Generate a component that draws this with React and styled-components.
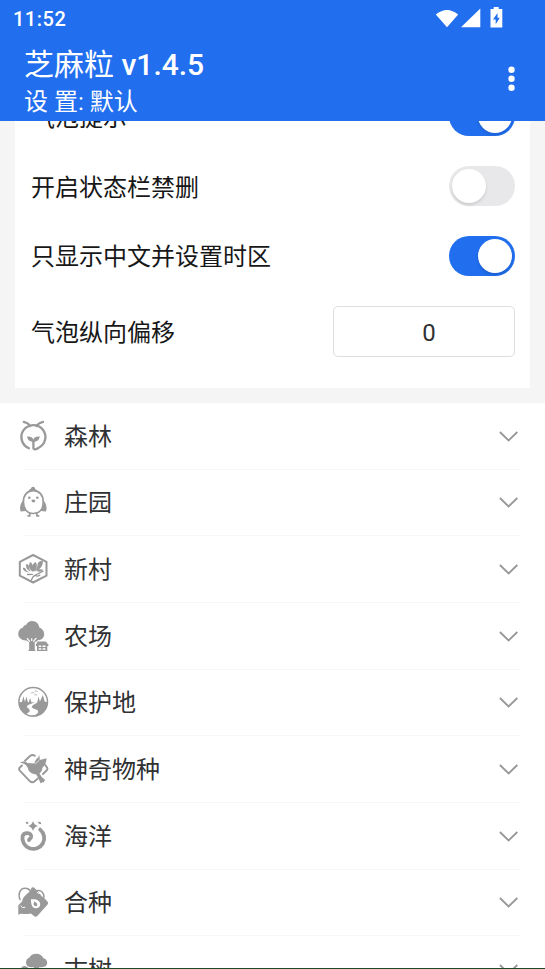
import React from "react";
import styled, { createGlobalStyle } from "styled-components";

const GlobalStyle = createGlobalStyle`
  * { box-sizing: border-box; }
  html, body { margin: 0; padding: 0; overflow: hidden; }
  body { font-family: Roboto, "Noto Sans CJK SC", sans-serif; }
`;

const Screen = styled.div`
  width: 545px;
  height: 969px;
  overflow: hidden;
  display: flex;
  flex-direction: column;
  background: #f5f5f5;
  border-bottom: 1px solid #1d4a22;
`;

const Header = styled.header`
  flex: none;
  height: 121px;
  background: #216eee;
  color: #fff;
`;

const StatusBar = styled.div`
  height: 38px;
  padding: 0 40px 0 13px;
  display: flex;
  justify-content: space-between;
  align-items: center;
  font-size: 20px;
  font-weight: 500;
  letter-spacing: 0.5px;
`;

const StatusIcons = styled.div`
  display: flex;
  svg { display: block; }
`;

const TitleBar = styled.div`
  height: 83px;
  padding: 2px 24px 0 24px;
  display: flex;
  justify-content: space-between;
`;

const Title = styled.h1`
  margin: 0;
  font-size: 30px;
  line-height: 44px;
  font-weight: 500;
  font-family: Roboto, sans-serif;
  white-space: pre;
`;

const TitleName = styled.span`
  font-family: "Noto Sans CJK SC", sans-serif;
  font-weight: 400;
`;

const Subtitle = styled.div`
  font-size: 24px;
  line-height: 30px;
  white-space: pre;
`;

const MenuButton = styled.button`
  border: 0;
  padding: 0;
  margin-top: 26px;
  width: 20px;
  height: 26px;
  background: none;
  svg { display: block; }
`;

const Content = styled.main`
  flex: 1;
  min-height: 0;
  overflow: hidden;
`;

const Card = styled.section`
  margin: 0 15px 15px;
  height: 267px;
  padding: 0 15px 0 16px;
  background: #fff;
  overflow: hidden;
`;

const SettingRow = styled.div`
  height: ${(p) => p.$height}px;
  margin-top: ${(p) => p.$offset || 0}px;
  display: flex;
  align-items: center;
  justify-content: space-between;
  font-size: 24px;
  line-height: 36px;
  color: #171717;
`;

const SettingLabel = styled.span`
  padding-top: ${(p) => p.$drop}px;
`;

const Switch = styled.div`
  width: 66px;
  height: 40px;
  padding: 3px;
  border-radius: 20px;
  display: flex;
  justify-content: ${(p) => (p.$on ? "flex-end" : "flex-start")};
  background: ${(p) => (p.$on ? "#216eee" : "#e8e8ea")};
`;

const Knob = styled.span`
  width: 34px;
  height: 34px;
  border-radius: 50%;
  background: #fff;
  box-shadow: 0 2px 3px rgba(0, 0, 0, 0.12);
`;

const NumberField = styled.div`
  width: 182px;
  height: 51px;
  padding: 3px 0 0 10px;
  border: 1px solid #e1dcde;
  border-radius: 5px;
  display: flex;
  align-items: center;
  justify-content: center;
  font-size: 24px;
  color: #303133;
`;

const List = styled.ul`
  margin: 0;
  padding: 0;
  list-style: none;
  background: #fff;
`;

const ListItem = styled.li`
  height: 66.66px;
  padding: 0 24px 0 17px;
  display: grid;
  grid-template: 1fr 1px / 32px 1fr 24px;
  column-gap: 15px;
  align-items: center;
  color: #303133;
  font-size: 24px;
  line-height: 36px;
  svg { display: block; }
`;

const ItemLabel = styled.span`
  padding-top: 2px;
`;

const Divider = styled.div`
  grid-column: 1 / -1;
  height: 1px;
  margin-left: 7px;
  background: #f7f7f7;
`;

const Glyph = styled.svg.attrs({ width: 32, height: 32, viewBox: "0 0 32 32", fill: "#999" })`
  .line { fill: none; stroke: #999; stroke-linecap: round; stroke-linejoin: round; }
  .cut { fill: #fff; }
  .cutline { fill: none; stroke: #fff; stroke-linecap: round; stroke-linejoin: round; }
`;

const ForestIcon = () => (
  <Glyph>
    <path className="line" strokeWidth="2.3" d="M6.800 1.900C9.500 2.500 12 4 13.400 6M26 1.900C23.300 2.500 20.800 4 19.400 6M12 28.200A12 12 0 1 1 21.300 28C19.500 29.200 16.500 30.200 16.400 28V22" />
    <path d="M10 16.600c3.500-.2 5.800.6 6.400 3.100.6-2.500 2.900-3.300 6.400-3.100-.4 3.100-2.300 4.900-5.300 5.200l-1.100 1.700-1.100-1.700c-3-.3-4.900-2.100-5.300-5.200Z" />
  </Glyph>
);

const ChickIcon = () => (
  <Glyph>
    <path className="line" strokeWidth="1.700" d="M16.300 4.600C10.400 4.600 6.400 9 6.400 15.800c0 7 3.400 11.700 9.900 11.700s9.900-4.700 9.900-11.700c0-6.800-4-11.200-9.900-11.200ZM12.800 27.500V30l-1.800-.2M19.900 27.500V30l1.800-.2" />
    <path d="M6 14.500C3.200 18 2.300 22 3.700 25.500l5-.6C6.800 22 5.900 18 6 14.500ZM26.600 14.500c2.800 3.500 3.700 7.500 2.300 11l-5-.6c1.900-2.900 2.800-6.900 2.700-10.400ZM12 5c.3-1.600 1-2.400 1.900-2.200.2-1.800 2.100-2.500 3.400-1.500.9.700 1 1.500.7 2 1-.1 2.200.8 2.300 1.700Z" />
    <circle cx="12.300" cy="11.800" r="1.300" /><circle cx="20.300" cy="11.800" r="1.300" />
    <path d="M14.300 14.100q2.100-1 4.200 0-.5 2.500-2.100 2.500t-2.100-2.500Z" />
  </Glyph>
);

const VillageIcon = () => (
  <Glyph>
    <path className="line" strokeWidth="2" d="M16.100 2 29.500 8.900v13.800L16.100 29.500 2.800 22.700V8.900Z" />
    <path d="M15.800 18.700C11.800 16.800 11 11.800 13.300 9c2.700 1.700 3.800 5.500 2.500 9.700ZM16.500 18.800C15 14 15.500 10.700 18.500 9c2.600 3.500 1.400 7.800-2 9.800ZM17.700 18.400c2-1.800 3-4.500 2.900-7.600 1.600-2.600 3.500-3.300 5.200-2.800.5 4.700-2.900 9.200-8.100 10.400ZM14.100 18.800c-3.200-1-5.600-4-5-7.500 1.500-.1 2.500.5 2.800 1.800 0 2.600.7 4.400 2.200 5.700ZM12.400 19.400C9 19.500 6.200 17.500 5.800 15c1.200-.5 2.300-.2 2.800.7.500 1.600 1.800 2.900 3.800 3.700ZM20 18.100c1.500-2 3.600-2.500 6.200-1.300-1.600 1.900-4.100 2.400-6.200 1.300Z" />
    <path className="line" strokeWidth="1.300" d="M14.300 27.400c.9-2.700 2.200-4.500 4-5.300 1 1.300 3 1 4.500 0M18.600 22l7.500-3.800M10.500 21.500l5-.2" />
  </Glyph>
);

const FarmIcon = () => (
  <Glyph>
    <path d="M9 5C10.500 2.400 12.500 1 15 1c4.200 0 6.900 3 7.200 6.300 2.900 1.200 5 4 5 6.800 0 3.700-2.500 6.100-6.400 6.100-1 1-1.900 1.500-3.100 1.700l.1 7.800 1 1.300H11l1.200-1.300-.1-7.700c-1-.3-1.800-.8-2.500-1.600C5 20.800 1.200 18 1.200 13.800c0-3 1.800-5.200 4.500-6C6.200 6.300 7.300 5.300 9 5Z" />
    <path className="cutline" strokeWidth="1.300" d="m10.400 18.600 2 2.600M19 18.400l-2.400 2.800M14.700 18.800v1.700" />
    <path d="M20.600 21.500h8.200l2.700 3.200v1.300h-1.200v5H20v-5h-1.200v-1.300Z" />
    <path className="cut" d="M21.600 25.500h2.700v1.600h-2.700ZM25.600 25.500h2.900v1.600h-2.900ZM21.600 28.200h2.700v1.600h-2.700ZM25.600 28.200h2.900v1.600h-2.900Z" />
  </Glyph>
);

const ReserveIcon = () => (
  <Glyph>
    <circle className="line" cx="16.200" cy="15.800" r="14.300" strokeWidth="1.500" />
    <path d="M2 16.300 5 16l1.400-5.800L8 16l1.400-5.500 1.500 5.700 1 .1 1.200-4.600 1.300 4.600 3.900.2c-6.500 1.600-10 3.500-7.500 5.500 3.500 2.200 1.700 4.200-1.400 6C5 26 2 22.500 2 16.300Z" />
    <path d="m20.200 16.500 1.300-6 1.400 5.100L25.900 9l1.700 6.500 2.700.8c.3 7.600-5.700 14-14.100 13.900l-2-.2c3.700-.6 7.200-2.500 7-4.600-.2-2-4.900-2-6.200-3.800-1.200-1.800 2.700-3.300 5.200-5.100Z" />
    <path className="line" strokeWidth=".7" d="m14.500 7 1.400-.5 1.100.6M18 5.200l1.300-.3 1 .5M17.800 9l1.100-.4.9.4" />
  </Glyph>
);

const SpeciesIcon = () => (
  <Glyph>
    <path className="line" strokeWidth="1.900" d="M8 7.700 13 3q2.500-2 4.800-.2M5 12.500 2.800 14.500q-1.400 1.600 0 3.100L13 28.300q2.400 2 4.700 0l3.300-2.900M26 21l3.800-3.700q1.300-1.500 0-3.200L28.200 12" />
    <path d="M3 9.400C5.500 8.100 8.500 8.300 10.400 9.900l7.100.6c.4-2.600 1.600-4.500 3.700-6L22.400 2l.4 5.100 6.800-1.900c-.3 4.300-1.500 7.600-4.200 9.500-.1 2.300-1.200 4.300-2.900 5.800l2.200 3.600 3.700 3.200-1.200.6-.4 1.700-1.600-.3-1.500 1.100-2.700-5.800-2-3.300c-4.100-.2-7.500-2.600-8-5.900C9.800 12.400 8 10.500 3 9.400Z" />
    <path className="cutline" strokeWidth=".7" d="m18.500 10.700 3.700-3.400" />
  </Glyph>
);

const OceanIcon = () => (
  <Glyph>
    <path className="line" strokeWidth="3.800" d="M23.200 9.600A10.900 10.900 0 1 1 5.600 16C7 11.800 14.700 12.200 14.200 16.700 13.900 18.800 12.100 18.600 12 20.200" />
    <path d="M16 .9Q17 4.800 20.900 5.900 17 7 16 10.900 15 7 11.100 5.900 15 4.800 16 .9Z" />
    <path d="m8.500 2 2.200-.3.800 1.800-1.800.7ZM20.400 1.800l3.200.2.800 2.200-2.400-.5Z" />
  </Glyph>
);

const PlantIcon = () => (
  <Glyph>
    <path className="line" strokeWidth="1.500" d="M3 13.500C.7 8 3 2.300 8 2.300c2.700 0 4.500 1 5.300 3" />
    <path d="m12.500 5.700 2.100-3.900q1-1.100 2.500-.3l3.200 3.300 10.400 11q1.100 1.600-.3 3L20.300 30q-1.600 1.400-3.300 0l-3.100-2.600-2.600.7H6.500c-2-.6-3.400-.4-5.200 1V19.200l3.800-3.800q.2-4.300 7.400-9.700Z" />
    <path className="line" strokeWidth="1.500" d="M20.600 4.600q5.800-.6 6.500 6.500" />
    <path className="cutline" strokeWidth="1" d="M20.400 6.500q4 .5 4.900 4M3.700 20.100q1.300 2.500 4.200 1.300" />
    <path className="cut" d="M13.900 13.300c6.500-.5 9.300 1.700 9.300 5 0 2.700-2 4.100-4.500 4-3.900-.2-4.600-4.100-4.800-9Z" />
    <path d="M17.300 15.500q4 1.900 2.700 4-1.600 1.500-3-.2-.8-1.600.3-3.800Z" />
  </Glyph>
);

const AncientTreeIcon = () => (
  <Glyph>
    <path d="M12.500 4.500C13.500 2 16 .7 19.300.7c3.400 0 5.900 1.700 6.900 4.300 2.500.8 4 2.500 4 4.800 0 2.800-2.100 4.400-5.500 4.400H22V31h-5V14.200h-2.600C11 14.200 9 12.500 9 9.500c0-2.400 1.500-4.300 3.500-5Z" />
    <path d="M3.500 18c0-3 1.600-5 4-5s4.600 2 4.600 5Z" />
  </Glyph>
);

const Chevron = () => (
  <svg width="24" height="24" viewBox="0 0 24 24" fill="none" stroke="#999" strokeWidth="1.900">
    <path d="m2.900 8 8.700 8.400L20.300 8" />
  </svg>
);

const SETTINGS = [
  { label: "气泡提示", on: true },
  { label: "开启状态栏禁删", on: false },
  { label: "只显示中文并设置时区", on: true },
];

const GROUPS = [
  ["森林", ForestIcon],
  ["庄园", ChickIcon],
  ["新村", VillageIcon],
  ["农场", FarmIcon],
  ["保护地", ReserveIcon],
  ["神奇物种", SpeciesIcon],
  ["海洋", OceanIcon],
  ["合种", PlantIcon],
  ["古树", AncientTreeIcon],
];

export default function App() {
  return (
    <Screen>
      <GlobalStyle />
      <Header>
        <StatusBar>
          <span>11:52</span>
          <StatusIcons>
            <svg width="70" height="24" viewBox="0 0 70 24" fill="#fff">
              <path d="M.8 7.500Q12-1.700 23.200 7.500L12 20.300ZM45.300 1.500v18.800H26Z" />
              <path fillRule="evenodd" d="M58.700 0h5v2h3.600v18.500H55.500V2h3.200ZM62.500 6l-4.500 6.500h2.700v4.800l4.100-6.500h-2.300Z" />
            </svg>
          </StatusIcons>
        </StatusBar>
        <TitleBar>
          <div>
            <Title><TitleName>芝麻粒</TitleName> v1.4.5</Title>
            <Subtitle>设 置: 默认</Subtitle>
          </div>
          <MenuButton aria-label="menu">
            <svg width="20" height="26" viewBox="0 0 20 26" fill="#fff">
              <circle cx="10.500" cy="3.700" r="3.200" />
              <circle cx="10.500" cy="12.700" r="3.200" />
              <circle cx="10.500" cy="21.700" r="3.200" />
            </svg>
          </MenuButton>
        </TitleBar>
      </Header>
      <Content>
        <Card>
          {SETTINGS.map((s, i) => (
            <SettingRow key={s.label} $height={69.8} $offset={i === 0 ? -39.5 : 0}>
              <SettingLabel $drop={i === 0 ? 4 : 3}>{s.label}</SettingLabel>
              <Switch $on={s.on}><Knob /></Switch>
            </SettingRow>
          ))}
          <SettingRow $height={81.4}>
            <SettingLabel $drop={3}>气泡纵向偏移</SettingLabel>
            <NumberField>0</NumberField>
          </SettingRow>
        </Card>
        <List>
          {GROUPS.map(([label, Icon]) => (
            <ListItem key={label}>
              <Icon />
              <ItemLabel>{label}</ItemLabel>
              <Chevron />
              <Divider />
            </ListItem>
          ))}
        </List>
      </Content>
    </Screen>
  );
}
